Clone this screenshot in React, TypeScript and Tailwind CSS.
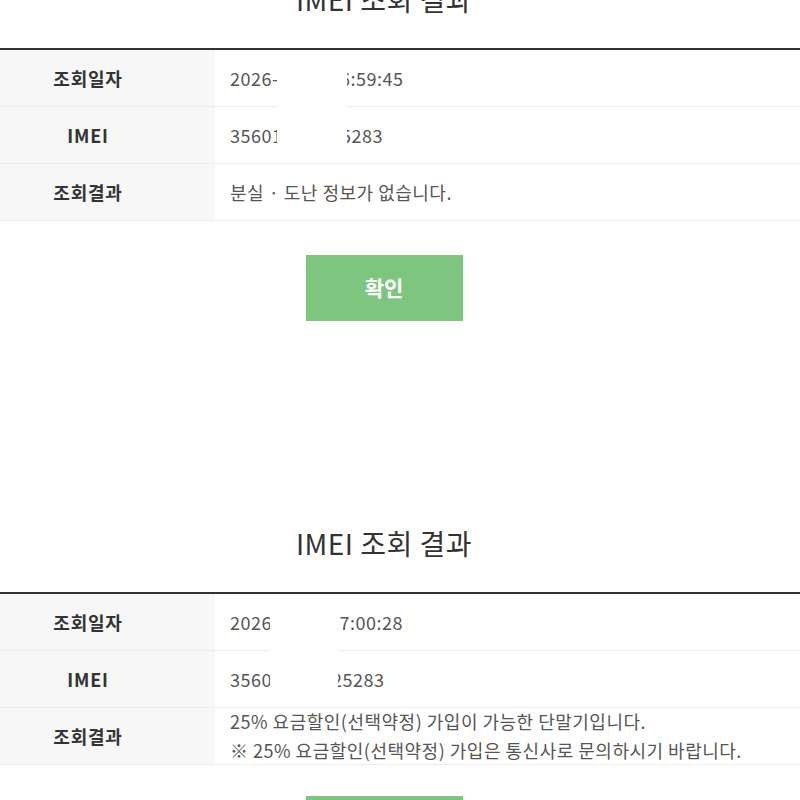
import React from 'react';

type Row = { label: string; value: React.ReactNode; tall?: boolean };

const FONT = "font-['Noto_Sans_CJK_KR','Noto_Sans',sans-serif]";

const Split = ({ left, leftWidth, right }: { left: string; leftWidth: number; right: string }) => (
  <span className="flex whitespace-nowrap">
    <span className="overflow-hidden" style={{ width: leftWidth }}>{left}</span>
    <span>{right}</span>
  </span>
);

const ResultSection = ({ rows, mask, last }: { rows: Row[]; mask: { left: number; width: number }; last?: boolean }) => (
  <section className="pb-[202px]">
    <div className="w-[768px] h-[40px] mb-[29px] flex items-center justify-center">
      <h2 className="text-[28px] text-[#333] font-normal leading-[40px] tracking-[0.5px]">IMEI 조회 결과</h2>
    </div>

    <div className="relative border-t-2 border-[#333]">
      {rows.map((row, i) => (
        <div key={i} className="flex border-b border-[#ececec] h-[57px]">
          <div className="w-[215px] shrink-0 bg-[#f7f7f7] pr-[39px] flex items-center justify-center text-[18px] tracking-[0.8px] font-bold text-[#333]">
            {row.label}
          </div>
          <div className={`flex-1 px-[15px] flex flex-col justify-center text-[18px] tracking-[0.5px] text-[#555] ${row.tall ? 'leading-[29px]' : ''}`}>
            {row.value}
          </div>
        </div>
      ))}
      {/* masked part of the values */}
      <div className="absolute top-[14px] h-[88px] bg-white" style={{ left: mask.left, width: mask.width }} />
    </div>

    <div className={`w-[768px] flex justify-center ${last ? 'mt-[31px]' : 'mt-[34px]'}`}>
      <button className="w-[157px] h-[66px] bg-[#7ec67f] text-white text-[21px] font-bold">확인</button>
    </div>
  </section>
);

export default function App() {
  return (
    <div className={`w-[800px] h-[800px] overflow-hidden bg-white ${FONT}`}>
      <div className="-mt-[21px]">
        <ResultSection
          mask={{ left: 277, width: 70 }}
          rows={[
            { label: '조회일자', value: <Split left="2026-01-22 1" leftWidth={110} right="6:59:45" /> },
            { label: 'IMEI', value: <Split left="356012345675" leftWidth={111} right="5283" /> },
            { label: '조회결과', value: '분실 · 도난 정보가 없습니다.' },
          ]}
        />
        <ResultSection
          last
          mask={{ left: 270, width: 68 }}
          rows={[
            { label: '조회일자', value: <Split left="2026-01-22 1" leftWidth={99} right="17:00:28" /> },
            { label: 'IMEI', value: <Split left="35601234567" leftWidth={102} right="25283" /> },
            {
              label: '조회결과',
              tall: true,
              value: (
                <>
                  <span>25% 요금할인(선택약정) 가입이 가능한 단말기입니다.</span>
                  <span>※ 25% 요금할인(선택약정) 가입은 통신사로 문의하시기 바랍니다.</span>
                </>
              ),
            },
          ]}
        />
      </div>
    </div>
  );
}
